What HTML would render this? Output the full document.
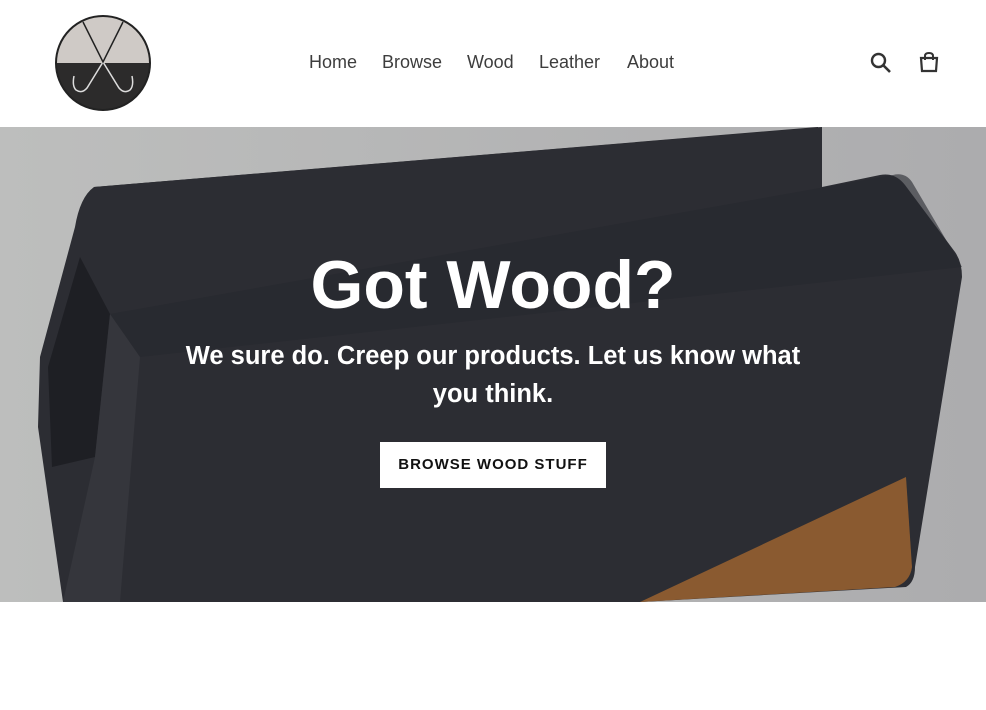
<!DOCTYPE html>
<html><head><style>
body{margin:0;width:986px;height:710px;background:#fff;font-family:"Liberation Sans",sans-serif;overflow:hidden;position:relative}
.nav{position:absolute;top:52px;font-size:18px;color:#3d3d3d}
.nav span{position:absolute;white-space:nowrap}
.hero{position:absolute;top:127px;left:0;width:986px;height:475px;overflow:hidden}
h1{position:absolute;top:246px;left:0;width:986px;text-align:center;margin:0;font-size:68px;font-weight:bold;color:#fff}
.sub{position:absolute;top:337px;left:0;width:986px;text-align:center;font-size:25.5px;font-weight:bold;color:#fff;line-height:38px}
.btn{position:absolute;top:442px;left:380px;width:226px;height:46px;background:#fff;color:#111;font-size:15px;font-weight:bold;letter-spacing:1px;text-align:center;line-height:46px}
</style></head><body>
<svg style="position:absolute;left:54px;top:14px" width="98" height="98" viewBox="0 0 98 98">
<defs><clipPath id="c"><circle cx="49" cy="49" r="47"/></clipPath></defs>
<g clip-path="url(#c)"><rect width="98" height="49" fill="#cfcac6"/><rect y="49" width="98" height="49" fill="#2c2b2b"/></g>
<circle cx="49" cy="49" r="47" fill="none" stroke="#222" stroke-width="2"/>
<path d="M49 48 L65 74 Q70 80 76 76 Q80 72 78 62" fill="none" stroke="#ddd" stroke-width="1.5"/>
<path d="M49 48 L33 74 Q28 80 22 76 Q18 72 20 62" fill="none" stroke="#ddd" stroke-width="1.5"/>
<path d="M29 8 L49 48 L69 8" fill="none" stroke="#222" stroke-width="1.5"/>
</svg>
<div class="nav"><span style="left:309px">Home</span><span style="left:382px">Browse</span><span style="left:467px">Wood</span><span style="left:539px">Leather</span><span style="left:627px">About</span></div>
<svg style="position:absolute;left:870px;top:52px" width="22" height="22" viewBox="0 0 22 22"><circle cx="8.5" cy="8.5" r="6.5" fill="none" stroke="#333" stroke-width="2.4"/><path d="M13 13 L20 20" stroke="#333" stroke-width="2.6"/></svg>
<svg style="position:absolute;left:918px;top:51px" width="22" height="22" viewBox="0 0 22 22"><path d="M3 7 H19 L18 20 H4 Z" fill="none" stroke="#333" stroke-width="2.2"/><path d="M7 9 V5 Q7 2 11 2 Q15 2 15 5 V9" fill="none" stroke="#333" stroke-width="2"/></svg>
<div class="hero">
<svg width="986" height="475" viewBox="0 0 986 475">
<defs><linearGradient id="bg" x1="0" x2="1"><stop offset="0" stop-color="#bdbebd"/><stop offset="1" stop-color="#acacae"/></linearGradient></defs>
<rect width="986" height="475" fill="url(#bg)"/>
<path d="M94 60 L818 0 L822 104 L300 200 L110 187 Z" fill="#25262c"/>
<path d="M94 60 Q80 70 75 100 L40 230 L38 300 L63 475 L640 475 L640 475 L906 460 Q915 455 915 440 L962 150 Q962 135 955 125 L905 58 Q895 45 880 48 L822 60 L822 0 Z" fill="#2c2d33"/>
<path d="M110 187 L893 48 Q905 45 912 55 L962 140 L140 230 Z" fill="#27282e" opacity="0.6"/>
<path d="M80 130 L110 187 L95 330 L52 340 L48 240 Z" fill="#1e1f24"/>
<path d="M110 187 L140 230 L120 475 L63 475 L95 330 Z" fill="#35363c"/>
<path d="M640 475 L906 350 L912 440 Q910 455 895 460 Z" fill="#8a5a30"/>
</svg>
</div>
<h1>Got Wood?</h1>
<div class="sub">We sure do. Creep our products. Let us know what<br>you think.</div>
<div class="btn">BROWSE WOOD STUFF</div>
</body></html>
